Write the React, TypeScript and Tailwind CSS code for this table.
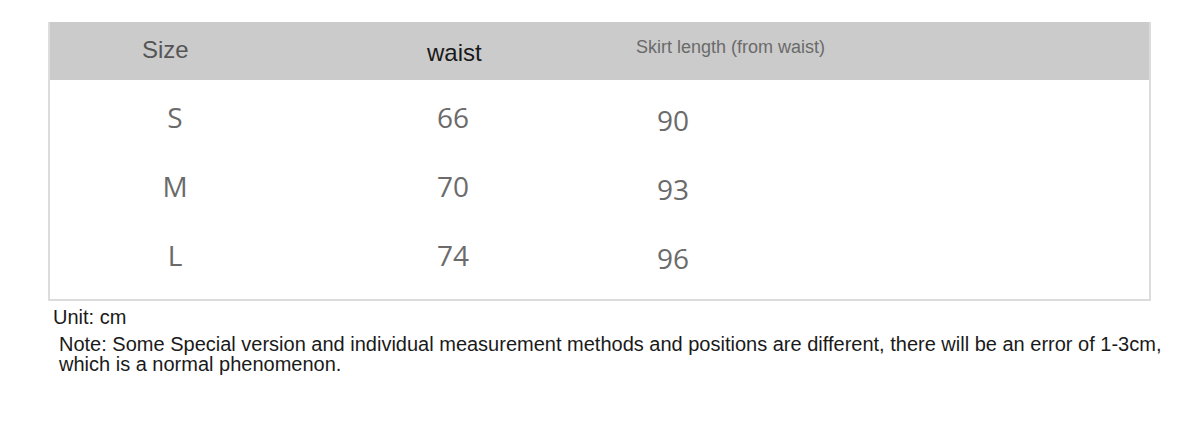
export default function App() {
  const rows = [
    {size: 'S', waist: '66', length: '90'},
    {size: 'M', waist: '70', length: '93'},
    {size: 'L', waist: '74', length: '96'},
  ];

  return (
    <div className="w-[1199px] h-[437px] bg-white pt-[22px] pl-[48px] font-['Liberation_Sans',Arial,sans-serif]">
      <div className="w-[1103px] h-[279px] border-2 border-t-0 border-[#dcdcdc] flex flex-col">
        <div className="h-[58px] shrink-0 bg-[#cbcbcb] relative">
          <span className="absolute left-[92px] top-[10px] text-[24px] text-[#555]">Size</span>
          <span className="absolute left-[377px] top-[13px] text-[24px] text-[#1a1a1a]">waist</span>
          <span className="absolute left-[586px] top-[14px] text-[18px] leading-[22px] text-[#6a6a6a]">Skirt length (from waist)</span>
        </div>
        <div className="flex-1 flex flex-col pt-[2px] font-['Open_Sans','Noto_Sans',sans-serif] text-[28px] text-[#6b6b6b]">
          {rows.map(r => (
            <div key={r.size} className="h-[69px] flex items-center">
              <span className="w-[248px] text-center pl-[2px]">{r.size}</span>
              <span className="w-[310px] text-center">{r.waist}</span>
              <span className="pl-[49px] pt-[6px]">{r.length}</span>
            </div>
          ))}
        </div>
      </div>
      <div className="text-[20px] leading-[22px] text-[#1a1a1a] pt-[5px] pl-[5px]">Unit: cm</div>
      <div className="text-[20px] leading-[20px] text-[#1a1a1a] pt-[6px] pl-[11px] w-[1115px]">
        Note: Some Special version and individual measurement methods and positions are different, there will be an error of 1-3cm, which is a normal phenomenon.
      </div>
    </div>
  );
}
